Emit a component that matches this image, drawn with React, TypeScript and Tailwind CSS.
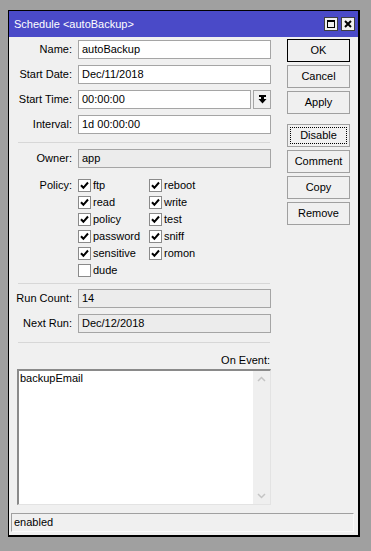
import { ReactNode } from "react";

const font = { fontFamily: '"Liberation Sans", Arial, sans-serif' };

const Label = ({ children }: { children: ReactNode }) => (
  <div className="w-[64px] shrink-0 pr-[1px] text-right text-[11px] leading-[13px] text-black">
    {children}
  </div>
);

const Field = ({ value, readOnly }: { value: string; readOnly?: boolean }) => (
  <div
    className={`flex h-[19px] flex-1 items-center border border-[#a5a5a5] pl-[3px] text-[11px] text-black ${
      readOnly ? "bg-[#ececec]" : "bg-white"
    }`}
  >
    {value}
  </div>
);

const Row = ({ label, children }: { label: string; children: ReactNode }) => (
  <div className="flex h-[19px] items-center gap-[5px]">
    <Label>{label}</Label>
    {children}
  </div>
);

const Sep = () => <div className="ml-[9px] mr-[1px] h-px bg-[#d7d7d7]" />;

const Check = ({ label, checked }: { label: string; checked: boolean }) => (
  <div className="flex h-[17px] items-center gap-[2px] text-[11px] text-black">
    <div className="flex h-[13px] w-[13px] items-center justify-center border border-[#8a8a8a] bg-white">
      {checked && (
        <svg width="9" height="9" viewBox="0 0 9 9">
          <path d="M1 4.2 L3.4 6.8 L8 1.5" fill="none" stroke="#000" strokeWidth="2" />
        </svg>
      )}
    </div>
    <span>{label}</span>
  </div>
);

const Btn = ({ label, primary, focus }: { label: string; primary?: boolean; focus?: boolean }) => (
  <div
    className={`flex h-[23px] w-[63px] items-center justify-center bg-[#f0f0f0] text-[11px] text-black ${
      primary ? "border border-black" : "border border-[#a0a0a0]"
    }`}
  >
    {focus ? (
      <div className="flex h-[17px] w-[57px] items-center justify-center border border-dotted border-black">
        {label}
      </div>
    ) : (
      label
    )}
  </div>
);

const left = [
  ["ftp", true],
  ["read", true],
  ["policy", true],
  ["password", true],
  ["sensitive", true],
  ["dude", false],
] as const;
const right = [
  ["reboot", true],
  ["write", true],
  ["test", true],
  ["sniff", true],
  ["romon", true],
] as const;

const App = () => {
  return (
    <div className="h-[551px] w-[371px] overflow-hidden bg-[#a0a0a0] pl-[8px] pt-[10px]" style={font}>
      <div className="flex h-[527px] w-[352px] flex-col border-b-2 border-l border-r-2 border-t border-black bg-[#f0f0f0]">
        {/* title bar */}
        <div className="flex h-[26px] shrink-0 items-center justify-between bg-[#4a4ac8] pl-[5px] pr-[3px]">
          <span className="text-[11px] text-white">Schedule &lt;autoBackup&gt;</span>
          <div className="flex gap-[3px]">
            <div className="flex h-[14px] w-[14px] items-center justify-center border border-[#404040] bg-[#f0f0f0]">
              <div className="h-[8px] w-[8px] border border-black border-t-2" />
            </div>
            <div className="flex h-[14px] w-[14px] items-center justify-center border border-[#404040] bg-[#f0f0f0]">
              <svg width="8" height="8" viewBox="0 0 8 8">
                <path d="M1 1 L7 7 M7 1 L1 7" stroke="#000" strokeWidth="2" />
              </svg>
            </div>
          </div>
        </div>

        <div className="flex flex-1 flex-col">
          <div className="flex gap-[16px]">
            {/* form */}
            <div className="flex w-[262px] flex-col pt-[3px]">
              <div className="flex flex-col gap-[6px]">
                <Row label="Name:">
                  <Field value="autoBackup" />
                </Row>
                <Row label="Start Date:">
                  <Field value="Dec/11/2018" />
                </Row>
                <Row label="Start Time:">
                  <div className="flex flex-1 gap-[2px]">
                    <Field value="00:00:00" />
                    <div className="flex h-[19px] w-[18px] items-center justify-center border border-[#a5a5a5] bg-[#f0f0f0]">
                      <svg width="9" height="9" viewBox="0 0 9 9">
                        <rect x="1" y="0" width="7" height="2" fill="#000" />
                        <rect x="3" y="2" width="3" height="2" fill="#000" />
                        <path d="M0.5 4 L8.5 4 L4.5 8.5 Z" fill="#000" />
                      </svg>
                    </div>
                  </div>
                </Row>
                <Row label="Interval:">
                  <Field value="1d 00:00:00" />
                </Row>
              </div>

              <div className="mt-[8px]">
                <Sep />
              </div>

              <div className="mt-[6px]">
                <Row label="Owner:">
                  <Field value="app" readOnly />
                </Row>
              </div>

              <div className="mt-[9px] flex gap-[5px]">
                <div className="flex h-[17px] items-center">
                  <Label>Policy:</Label>
                </div>
                <div className="flex">
                  <div className="flex w-[71px] flex-col">
                    {left.map(([l, c]) => (
                      <Check key={l} label={l} checked={c} />
                    ))}
                  </div>
                  <div className="flex flex-col">
                    {right.map(([l, c]) => (
                      <Check key={l} label={l} checked={c} />
                    ))}
                  </div>
                </div>
              </div>

              <div className="mt-[4px]">
                <Sep />
              </div>

              <div className="mt-[5px] flex flex-col gap-[6px]">
                <Row label="Run Count:">
                  <Field value="14" readOnly />
                </Row>
                <Row label="Next Run:">
                  <Field value="Dec/12/2018" readOnly />
                </Row>
              </div>

              <div className="mt-[9px]">
                <Sep />
              </div>

              <div className="mt-[10px] pr-[1px] text-right text-[11px] leading-[14px] text-black">On Event:</div>

              <div className="ml-[8px] mt-[2px] flex h-[136px] border-b border-l-2 border-r border-t-2 border-b-[#e3e3e3] border-l-[#8a8a8a] border-r-[#e3e3e3] border-t-[#8a8a8a] bg-white">
                <div className="flex-1 pl-px text-[11px] leading-[14px] text-black">backupEmail</div>
                <div className="flex w-[17px] flex-col items-center justify-between bg-[#efefef] py-[5px]">
                  <svg width="9" height="6" viewBox="0 0 9 6">
                    <path d="M1 5 L4.5 1.5 L8 5" fill="none" stroke="#c4c4c4" strokeWidth="1.5" />
                  </svg>
                  <svg width="9" height="6" viewBox="0 0 9 6">
                    <path d="M1 1 L4.5 4.5 L8 1" fill="none" stroke="#c4c4c4" strokeWidth="1.5" />
                  </svg>
                </div>
              </div>
            </div>

            {/* buttons */}
            <div className="flex flex-col gap-[3px] pt-[2px]">
              <Btn label="OK" primary />
              <Btn label="Cancel" />
              <Btn label="Apply" />
              <div className="mt-[7px]">
                <Btn label="Disable" focus />
              </div>
              <Btn label="Comment" />
              <Btn label="Copy" />
              <Btn label="Remove" />
            </div>
          </div>

          {/* status bar */}
          <div className="ml-[2px] mt-[8px] flex h-[19px] w-[343px] items-center border-b border-l border-r border-t border-b-[#fafafa] border-l-[#a0a0a0] border-r-[#fafafa] border-t-[#a0a0a0] pl-[2px] text-[11px] text-black">
            enabled
          </div>
        </div>
      </div>
    </div>
  );
};

export default App;
